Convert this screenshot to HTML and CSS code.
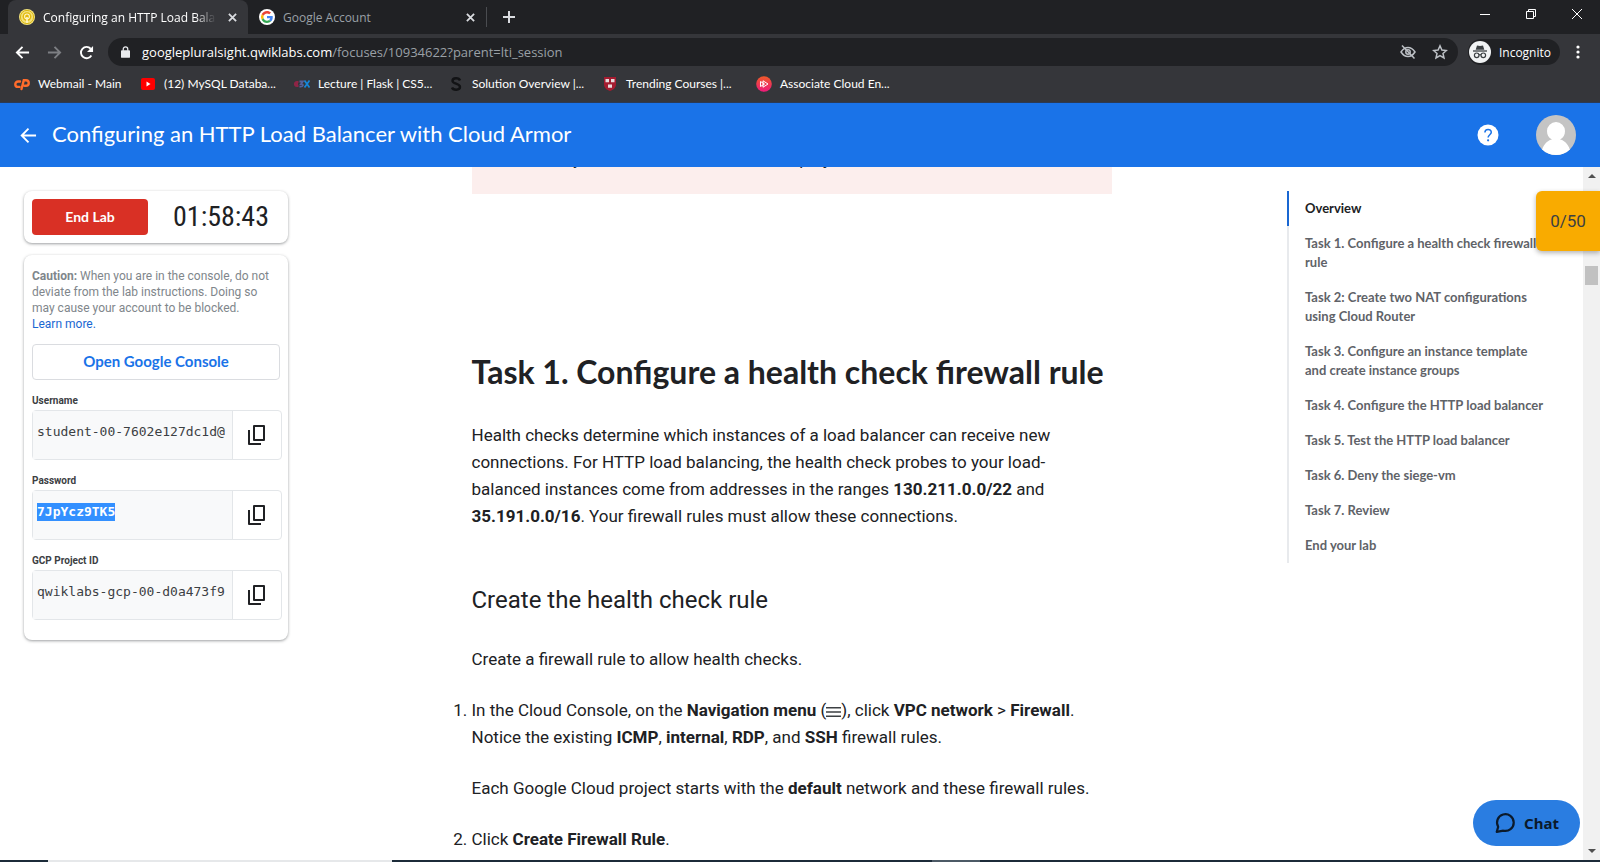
FILE: index.html
```html
<!DOCTYPE html>
<html lang="en">
<head>
<meta charset="utf-8">
<title>Configuring an HTTP Load Balancer with Cloud Armor</title>
<link rel="stylesheet" href="styles.css">
</head>
<body>
<div class="tabstrip">
  <div class="tab tab-active">
    <svg class="favicon" viewBox="0 0 16 16"><circle cx="8" cy="8" r="8" fill="#f3e27a"/><circle cx="8" cy="8" r="6.6" fill="none" stroke="#d9b514" stroke-width="1"/><circle cx="8" cy="7.6" r="4.4" fill="#e3b90c"/><circle cx="8" cy="7.4" r="2.4" fill="none" stroke="#fff7c9" stroke-width="1.1"/><path d="M8 8v6" stroke="#fff7c9" stroke-width="1.6"/></svg>
    <span class="tab-title tab-fade">Configuring an HTTP Load Balancer with Cloud Armor</span>
    <button class="tab-close" aria-label="Close tab"><svg viewBox="0 0 10 10"><path d="M1 1l8 8M9 1l-8 8"/></svg></button>
  </div>
  <div class="tab">
    <svg class="favicon" viewBox="0 0 48 48"><circle cx="24" cy="24" r="24" fill="#fff"/><g transform="translate(6 6) scale(.75)"><path fill="#EA4335" d="M24 9.5c3.5 0 6.7 1.2 9.2 3.6l6.9-6.9C35.900 2.400 30.500 0 24 0 14.600 0 6.500 5.400 2.600 13.200l8 6.200C12.400 13.700 17.700 9.500 24 9.500z"/><path fill="#4285F4" d="M47 24.500c0-1.600-.2-3.100-.4-4.500H24v9h12.900c-.6 3-2.300 5.500-4.800 7.200l7.700 6C44.400 38 47 31.800 47 24.500z"/><path fill="#FBBC05" d="M10.500 28.600a14.500 14.500 0 0 1 0-9.200l-8-6.200a24 24 0 0 0 0 21.600z"/><path fill="#34A853" d="M24 48c6.500 0 11.900-2.100 15.900-5.800l-7.700-6c-2.200 1.500-4.900 2.300-8.200 2.300-6.300 0-11.600-4.200-13.500-9.900l-8 6.200C6.500 42.600 14.600 48 24 48z"/></g></svg>
    <span class="tab-title">Google Account</span>
    <button class="tab-close" aria-label="Close tab"><svg viewBox="0 0 10 10"><path d="M1 1l8 8M9 1l-8 8"/></svg></button>
  </div>
  <button class="new-tab" aria-label="New tab"><svg viewBox="0 0 12 12"><path d="M6 0v12M0 6h12"/></svg></button>
  <div class="window-controls">
    <button aria-label="Minimize"><svg viewBox="0 0 10 10"><path d="M0 5.500h10"/></svg></button>
    <button aria-label="Restore"><svg viewBox="0 0 10 10"><path d="M.5 2.500h7v7h-7zM2.500 2.500v-2h7v7h-2"/></svg></button>
    <button aria-label="Close"><svg viewBox="0 0 10 10"><path d="M0 0l10 10M10 0L0 10"/></svg></button>
  </div>
</div>

<div class="toolbar">
  <button class="tool" aria-label="Back"><svg viewBox="0 0 16 16"><path d="M15 8H2M8 2L2 8l6 6"/></svg></button>
  <button class="tool tool-off" aria-label="Forward"><svg viewBox="0 0 16 16"><path d="M1 8h13M8 2l6 6-6 6"/></svg></button>
  <button class="tool" aria-label="Reload"><svg viewBox="0 0 16 16"><path d="M13.200 11.200A6 6 0 1 1 12.500 4"/><path class="solid" d="M15 1v6.500H8.500z"/></svg></button>
  <div class="omnibox">
    <svg class="lock" viewBox="0 0 10 13"><rect x="0" y="4.500" width="10" height="8.500" rx="1" fill="#e8eaed"/><path d="M2.500 5V3.200a2.500 2.500 0 0 1 5 0V5" fill="none" stroke="#e8eaed" stroke-width="1.400"/></svg>
    <div class="url"><span class="host">googlepluralsight.qwiklabs.com</span>/focuses/10934622?parent=lti_session</div>
    <svg class="omni-icon" viewBox="0 0 16 16"><path d="M1 8c2-3 4.300-4.500 7-4.500S13 5 15 8c-2 3-4.300 4.500-7 4.500S3 11 1 8z"/><circle cx="8" cy="8" r="2.200"/><path d="M2 1.500l12.500 13"/></svg>
    <svg class="omni-icon" viewBox="0 0 16 16"><path d="M8 1.800l1.900 4.200 4.500.5-3.400 3 1 4.500L8 11.700 4 14l1-4.500-3.400-3 4.500-.5z"/></svg>
  </div>
  <div class="incognito">
    <svg viewBox="0 0 22 22"><circle cx="11" cy="11" r="11" fill="#f1f3f4"/><path d="M8 4.500l3 .6 3-.6 1.300 4.300H6.700z" fill="#3c4043"/><path d="M4 10h14" stroke="#3c4043" stroke-width="1.300"/><g fill="none" stroke="#3c4043" stroke-width="1.200"><circle cx="7.700" cy="14.300" r="2.300"/><circle cx="14.300" cy="14.300" r="2.300"/><path d="M10 14c.6-.4 1.400-.4 2 0"/></g></svg>
    <span>Incognito</span>
  </div>
  <button class="more" aria-label="Menu"><svg viewBox="0 0 4 14"><circle cx="2" cy="2" r="1.600"/><circle cx="2" cy="7" r="1.600"/><circle cx="2" cy="12" r="1.600"/></svg></button>
</div>

<nav class="bookmarks">
  <a href="#" class="bookmark bookmark-first"><svg viewBox="0 0 16 16"><g fill="none" stroke="#ff6c2c" stroke-width="2.400" stroke-linecap="round"><path d="M6 5.500H4a2.700 2.700 0 0 0 0 5.400h1.500"/><path d="M7.500 13l2.300-8.800H12a2.700 2.700 0 0 1 0 5.500h-1.500"/></g></svg><span>Webmail - Main</span></a>
  <a href="#" class="bookmark"><svg viewBox="0 0 16 16"><rect x="1" y="2" width="14" height="12" rx="2" fill="#f00"/><path d="M6.500 5.500l4 2.500-4 2.500z" fill="#fff"/></svg><span>(12) MySQL Databa...</span></a>
  <a href="#" class="bookmark"><svg viewBox="0 0 16 16"><g fill="none" stroke-width="1.800"><path d="M4.500 6H2.800a2 2 0 0 0 0 4h1.700M1 8h3" stroke="#8e2546"/><path d="M5.500 5.500h3.300L7 8c3 0 2.500 3-1.500 2.500" stroke="#56619b"/><path d="M10.500 4.500l5 7M15.500 4.500l-5 7" stroke="#1686d9"/></g></svg><span>Lecture | Flask | CS5...</span></a>
  <a href="#" class="bookmark"><svg viewBox="0 0 16 16"><path d="M12 4.500C11 1.500 4.500 1.500 4.500 5c0 3 7.500 2.500 7.500 6 0 3.500-7 3.500-8 .5" fill="none" stroke="#121315" stroke-width="2.400"/></svg><span>Solution Overview |...</span></a>
  <a href="#" class="bookmark"><svg viewBox="0 0 16 16"><path d="M2 1h12v7c0 4-3 6-6 7-3-1-6-3-6-7z" fill="#a51c30"/><path d="M3.500 3h3.500v3.200H3.500zM9 3h3.500v3.200H9zM6 8.500h4v3.200H6z" fill="#e8dcdd"/></svg><span>Trending Courses |...</span></a>
  <a href="#" class="bookmark"><svg viewBox="0 0 16 16"><defs><linearGradient id="ps" x1="0" y1="0" x2="0" y2="1"><stop offset="0" stop-color="#f05a28"/><stop offset="1" stop-color="#ed1a7b"/></linearGradient></defs><circle cx="8" cy="8" r="7.800" fill="url(#ps)"/><path d="M4.500 5.500l4 2.500-4 2.500zM7 4.800l5 3.200-5 3.200z" fill="none" stroke="#fff" stroke-width="1"/></svg><span>Associate Cloud En...</span></a>
</nav>

<header class="lab-header">
  <button class="header-back" aria-label="Back"><svg viewBox="0 0 18 18"><path d="M17 9H2M9 1.800L1.800 9 9 16.200"/></svg></button>
  <h1>Configuring an HTTP Load Balancer with Cloud Armor</h1>
  <button class="help" aria-label="Help"><svg viewBox="0 0 22 22"><circle cx="11" cy="11" r="10.500" fill="#fff"/><path d="M7.900 8.600c0-4.200 6.400-4 6.400-.3 0 2.300-3.200 2.700-3.200 5.200" fill="none" stroke="#1a73e8" stroke-width="1.500"/><circle cx="11.100" cy="16.300" r="1.100" fill="#1a73e8"/></svg></button>
  <button class="avatar" aria-label="Account"><svg viewBox="0 0 40 40"><clipPath id="av"><circle cx="20" cy="20" r="20"/></clipPath><g clip-path="url(#av)"><path fill="#c4c4c4" d="M0 0h40v40H0z"/><path fill="#fff" d="M6 35c2-7 7-10 10-10.500C12.500 22.500 11 20 11 16a9 9 0 0 1 18 0c0 4-1.500 6.500-5 8.500C27 25 32 28 34 35v5H6z"/></g></svg></button>
</header>

<div class="viewport">
  <div class="page">
    <aside class="sidebar">
      <section class="card timer-card">
        <button class="end-lab">End Lab</button>
        <div class="timer">01:58:43</div>
      </section>
      <section class="card panel">
        <p class="caution"><b>Caution:</b> When you are in the console, do not deviate from the lab instructions. Doing so may cause your account to be blocked. <a href="#">Learn more.</a></p>
        <button class="open-console">Open Google Console</button>
        <label for="user">Username</label>
        <div class="field"><input id="user" readonly value="student-00-7602e127dc1d@"><button aria-label="Copy username"><svg viewBox="0 0 24 24"><path d="M9 3h10v14H9z"/><path d="M4 7v14h12"/></svg></button></div>
        <label for="pass">Password</label>
        <div class="field"><output id="pass"><mark>7JpYcz9TK5</mark></output><button aria-label="Copy password"><svg viewBox="0 0 24 24"><path d="M9 3h10v14H9z"/><path d="M4 7v14h12"/></svg></button></div>
        <label for="project">GCP Project ID</label>
        <div class="field"><input id="project" readonly value="qwiklabs-gcp-00-d0a473f9"><button aria-label="Copy project ID"><svg viewBox="0 0 24 24"><path d="M9 3h10v14H9z"/><path d="M4 7v14h12"/></svg></button></div>
      </section>
    </aside>

    <main class="article">
      <p class="warning">Do not mix your own account and the lab project.</p>
      <h2>Task 1. Configure a health check firewall rule</h2>
      <p>Health checks determine which instances of a load balancer can receive new connections. For HTTP load balancing, the health check probes to your load-balanced instances come from addresses in the ranges <b>130.211.0.0/22</b> and <b>35.191.0.0/16</b>. Your firewall rules must allow these connections.</p>
      <h3>Create the health check rule</h3>
      <p>Create a firewall rule to allow health checks.</p>
      <ol>
        <li>
          <p>In the Cloud Console, on the <b>Navigation menu</b> (<svg class="menu-icon" viewBox="0 0 16 12"><path d="M0 1.500h16M0 6h16M0 10.500h16"/></svg>), click <b>VPC network</b> &gt; <b>Firewall</b>. Notice the existing <b>ICMP</b>, <b>internal</b>, <b>RDP</b>, and <b>SSH</b> firewall rules.</p>
          <p>Each Google Cloud project starts with the <b>default</b> network and these firewall rules.</p>
        </li>
        <li><p>Click <b>Create Firewall Rule</b>.</p></li>
      </ol>
    </main>

    <nav class="toc">
      <a href="#" class="current">Overview</a>
      <a href="#">Task 1. Configure a health check firewall rule</a>
      <a href="#">Task 2: Create two NAT configurations using Cloud Router</a>
      <a href="#">Task 3. Configure an instance template and create instance groups</a>
      <a href="#">Task 4. Configure the HTTP load balancer</a>
      <a href="#">Task 5. Test the HTTP load balancer</a>
      <a href="#">Task 6. Deny the siege-vm</a>
      <a href="#">Task 7. Review</a>
      <a href="#">End your lab</a>
    </nav>
  </div>
  <div class="scrollbar">
    <svg viewBox="0 0 8 4"><path d="M0 4l4-4 4 4z"/></svg>
    <div class="track"><div class="thumb"></div></div>
    <svg viewBox="0 0 8 4"><path d="M0 0l4 4 4-4z"/></svg>
  </div>
  <div class="score">0/50</div>
  <button class="chat"><svg viewBox="0 0 20 20"><path d="M2.500 18l1.300-4.500A7.600 7.600 0 1 1 8.500 17z"/></svg>Chat</button>
</div>
<div class="taskbar"><div class="task-search"></div><div class="task-active"></div></div>
</body>
</html>
```

FILE: styles.css
```css
* { box-sizing: border-box; }

body {
  margin: 0;
  height: 100vh;
  display: flex;
  flex-direction: column;
  overflow: hidden;
  background: #fff;
  color: #202124;
  font-family: Roboto, sans-serif;
}

button {
  border: 0;
  padding: 0;
  background: none;
  color: inherit;
  font: inherit;
  display: flex;
  align-items: center;
  justify-content: center;
}

a { text-decoration: none; color: inherit; }

svg { display: block; flex: none; }

/* Browser chrome */
.tabstrip, .toolbar, .bookmarks {
  display: flex;
  align-items: center;
  flex: none;
  font-family: "Open Sans", "Noto Sans", sans-serif;
  font-size: 12px;
  color: #fff;
}

.tabstrip { height: 34px; padding-left: 8px; background: #202124; }

.tab {
  display: flex;
  align-items: center;
  gap: 8px;
  width: 238px;
  height: 100%;
  padding: 0 8px 0 11px;
  color: #9aa0a6;
}

.tab-active { width: 240px; background: #35363a; border-radius: 8px 8px 0 0; color: #fff; }
.favicon { width: 16px; height: 16px; }
.tab-title { flex: 1; overflow: hidden; white-space: nowrap; }
.tab-fade { mask-image: linear-gradient(to right, #000 88%, transparent); }
.tab-close { width: 16px; height: 16px; }
.tab-close svg { width: 9px; height: 9px; fill: none; stroke: #dadce0; stroke-width: 2; }
.new-tab { width: 45px; height: 20px; border-left: 1px solid #4a4c50; }
.new-tab svg { width: 12px; height: 12px; stroke: #dadce0; stroke-width: 2; }
.window-controls { display: flex; margin-left: auto; height: 100%; padding-bottom: 6px; }
.window-controls button { width: 46px; height: 100%; }
.window-controls svg { width: 10px; height: 10px; fill: none; stroke: #fff; stroke-width: 1; }

.toolbar { height: 36px; padding: 0 10px 0 6px; background: #35363a; }
.tool { width: 32px; height: 28px; }
.tool svg { width: 15px; height: 15px; fill: none; stroke: #fff; stroke-width: 2; }
.tool .solid { fill: #fff; stroke: none; }
.tool-off svg { stroke: #7d7f83; }

.omnibox {
  flex: 1;
  display: flex;
  align-items: center;
  gap: 16px;
  height: 28px;
  margin-left: 6px;
  padding: 0 10px 0 13px;
  border-radius: 14px;
  background: #202124;
}

.lock { width: 9px; height: 12px; }
.url { flex: 1; margin-left: -4px; font-size: 13px; color: #9aa0a6; white-space: nowrap; }
.host { color: #fff; }
.omni-icon { width: 16px; height: 16px; fill: none; stroke: #bdc1c6; stroke-width: 1.5; }

.incognito {
  display: flex;
  align-items: center;
  gap: 8px;
  height: 26px;
  margin-left: 10px;
  padding: 0 9px 0 1px;
  border-radius: 13px;
  background: #202124;
}
.incognito svg { width: 22px; height: 22px; }

.more { width: 24px; height: 28px; margin-left: 6px; }
.more svg { width: 4px; height: 14px; fill: #fff; }

.bookmarks { height: 33px; padding: 0 14px 5px; background: #35363a; border-bottom: 1px solid #2b3a55; font-family: Lato, sans-serif; }
.bookmark { display: flex; align-items: center; gap: 8px; width: 154px; white-space: nowrap; }
.bookmark-first { width: 126px; }
.bookmark svg { width: 16px; height: 16px; }

/* Lab header */
.lab-header {
  flex: none;
  display: flex;
  align-items: center;
  height: 64px;
  padding: 0 24px 0 20px;
  background: #1a73e8;
  color: #fff;
}
.header-back svg { width: 17px; height: 17px; fill: none; stroke: #fff; stroke-width: 2; }
.lab-header h1 { margin: 0 auto 0 15px; padding-bottom: 2px; font: 400 22px/28px Lato, sans-serif; }
.help svg { width: 22px; height: 22px; }
.avatar { margin-left: 37px; }
.avatar svg { width: 40px; height: 40px; }

/* Page body */
.viewport { position: relative; flex: 1; min-height: 0; display: flex; overflow: hidden; }
.page { flex: 1; display: grid; grid-template-columns: 1fr 640px 1fr; align-items: start; }

.sidebar { width: 288px; padding: 24px 0 0 24px; display: grid; grid-template-columns: minmax(0, 1fr); gap: 12px; }
.card { border-radius: 8px; background: #fff; box-shadow: 0 1px 3px rgba(60, 64, 67, .5); padding: 8px; }
.timer-card { display: flex; height: 52px; align-items: center; }
.end-lab { width: 116px; height: 36px; padding-bottom: 2px; border-radius: 4px; background: #d93025; color: #fff; font: 700 14px Lato, sans-serif; }
.timer { flex: 1; padding-left: 14px; text-align: center; font: 400 28px/36px "Roboto Condensed", "Liberation Sans Narrow", sans-serif; }

.panel { padding-bottom: 20px; }
.caution { margin: 5px 0 12px; font-size: 12px; line-height: 16px; color: #80868b; }
.caution a { display: block; color: #1967d2; }
.open-console { width: 248px; height: 36px; padding-bottom: 2px; border: 1px solid #dadce0; border-radius: 4px; color: #1a73e8; font: 700 15px Lato, sans-serif; }
.panel label { display: block; margin: 14px 0 2px; font-size: 10px; line-height: 14px; font-weight: 700; color: #3c4043; }

.field { display: flex; width: 250px; height: 50px; border: 1px solid #e3e6e9; border-radius: 4px; }
.field input, .field output {
  flex: 1;
  min-width: 0;
  padding: 0 0 6px 4px;
  border: 0;
  border-right: 1px solid #e3e6e9;
  background: #f8f9fa;
  font: 400 13px/18px "DejaVu Sans Mono", monospace;
  color: #3c4043;
  outline: 0;
}
.field output { padding-top: 12px; }
.field mark { background: #3390ff; color: #fff; font-weight: 700; display: inline-block; }
.field button { width: 48px; }
.field button svg { width: 24px; height: 24px; fill: none; stroke: #202124; stroke-width: 2; stroke-linejoin: round; }

.article { font-size: 17px; line-height: 27px; }
.article p { margin: 0 0 24px; }
.article b { font-weight: 700; }
.article .warning { margin: -22px 0 158px; padding: 1px 16px 21px; background: #fceeed; }
.article h2 { margin: 0 0 30px; font: 700 32px/40px Lato, sans-serif; }
.article h3 { margin: 52px 0 28px; font-size: 24px; line-height: 36px; font-weight: 400; }
.article ol { margin: 0; padding: 0; }

.menu-icon { display: inline-block; width: 15px; height: 12px; vertical-align: -2px; fill: none; stroke: #3c4043; stroke-width: 1.5; }

.toc {
  justify-self: end;
  width: 296px;
  margin-top: 24px;
  font: 700 13px/19px Lato, sans-serif;
  color: #5f6368;
}
.toc a { display: block; padding: 8px 36px 8px 16px; border-left: 2px solid #e8eaed; }
.toc .current { border-left-color: #1967d2; color: #202124; }

.scrollbar {
  width: 17px;
  flex: none;
  display: flex;
  flex-direction: column;
  align-items: center;
  padding: 7px 0;
  background: #f1f1f1;
}
.scrollbar svg { width: 8px; height: 4px; fill: #505050; }
.track { flex: 1; width: 13px; }
.thumb { height: 19px; margin-top: 88px; background: #c1c1c1; }

.score {
  position: absolute;
  top: 24px;
  right: 0;
  width: 64px;
  height: 60px;
  border-radius: 6px 0 0 6px;
  background: #f9ab00;
  box-shadow: 0 2px 5px rgba(0, 0, 0, .3);
  font-size: 17px;
  line-height: 60px;
  text-align: center;
  color: #3c4043;
}

.chat {
  position: absolute;
  right: 20px;
  bottom: 14px;
  width: 107px;
  height: 46px;
  gap: 8px;
  border-radius: 23px;
  background: #2a7de1;
  color: #0b1a2b;
  font: 700 15px "Noto Sans", sans-serif;
}
.chat svg { width: 22px; height: 22px; fill: none; stroke: #0b1a2b; stroke-width: 2; stroke-linejoin: round; }

.taskbar { flex: none; display: flex; height: 2px; padding-left: 48px; background: #1c2b39; }
.task-search { width: 344px; background: #e6e8ea; }
.task-active { width: 48px; margin-left: 540px; background: #4c5a66; }
```
